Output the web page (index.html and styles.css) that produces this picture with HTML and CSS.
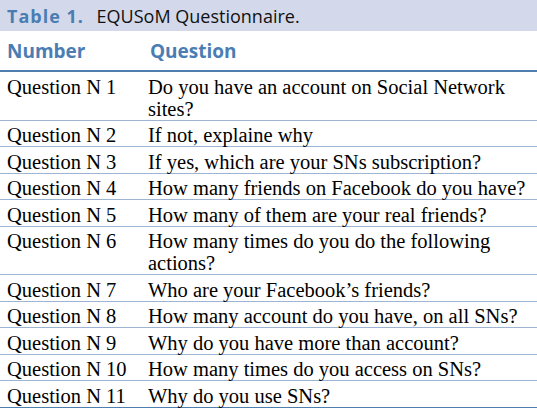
FILE: index.html
```html
<!DOCTYPE html>
<html>
<head>
<meta charset="utf-8">
<link rel="stylesheet" href="styles.css">
</head>
<body>
<div class="caption"><span class="label">Table 1.</span> EQUSoM Questionnaire.</div>
<table class="qtable">
  <thead>
    <tr><th class="c1">Number</th><th class="c2">Question</th></tr>
  </thead>
  <tbody>
    <tr><td class="c1">Question N 1</td><td class="c2">Do you have an account on Social Network sites?</td></tr>
    <tr><td class="c1">Question N 2</td><td class="c2">If not, explaine why</td></tr>
    <tr><td class="c1">Question N 3</td><td class="c2">If yes, which are your SNs subscription?</td></tr>
    <tr><td class="c1">Question N 4</td><td class="c2">How many friends on Facebook do you have?</td></tr>
    <tr><td class="c1">Question N 5</td><td class="c2">How many of them are your real friends?</td></tr>
    <tr><td class="c1">Question N 6</td><td class="c2">How many times do you do the following actions?</td></tr>
    <tr><td class="c1">Question N 7</td><td class="c2">Who are your Facebook’s friends?</td></tr>
    <tr><td class="c1">Question N 8</td><td class="c2">How many account do you have, on all SNs?</td></tr>
    <tr><td class="c1">Question N 9</td><td class="c2">Why do you have more than account?</td></tr>
    <tr><td class="c1">Question N 10</td><td class="c2">How many times do you access on SNs?</td></tr>
    <tr><td class="c1">Question N 11</td><td class="c2">Why do you use SNs?</td></tr>
  </tbody>
</table>
</body>
</html>
```
FILE: styles.css
```css
html, body {
  margin: 0;
  padding: 0;
  background: #ffffff;
}
body {
  width: 537px;
  overflow: hidden;
}
.caption {
  background: #d3d9ea;
  height: 31px;
  box-sizing: border-box;
  padding: 4px 0 0 7px;
  font-family: "Open Sans", "Liberation Sans", sans-serif;
  font-size: 18px;
  line-height: 24px;
  color: #111;
}
.caption .label {
  font-weight: bold;
  color: #4a7db3;
  letter-spacing: 1px;
  margin-right: 8px;
}
.qtable {
  width: 537px;
  border-collapse: collapse;
  border-spacing: 0;
}
.qtable th {
  font-family: "Open Sans", "Liberation Sans", sans-serif;
  font-weight: bold;
  font-size: 19px;
  color: #4a7db3;
  text-align: left;
  height: 38px;
  padding: 1px 0 0 7px;
  border-bottom: 2px solid #4f7fae;
  vertical-align: middle;
}
.qtable th.c2 {
  padding-left: 2px;
}
.qtable td {
  font-family: "Liberation Serif", "Times New Roman", serif;
  font-size: 20.5px;
  line-height: 22px;
  color: #000;
  padding: 3.5px 0 0 7px;
  border-bottom: 1px solid #9db4d2;
  vertical-align: top;
}
.qtable td.c1 {
  width: 148px;
  box-sizing: border-box;
}
.qtable td.c2 {
  padding-left: 0;
  padding-right: 4px;
}
.qtable tbody tr:last-child td {
  border-bottom: 3px double #4f7fae;
}
```
